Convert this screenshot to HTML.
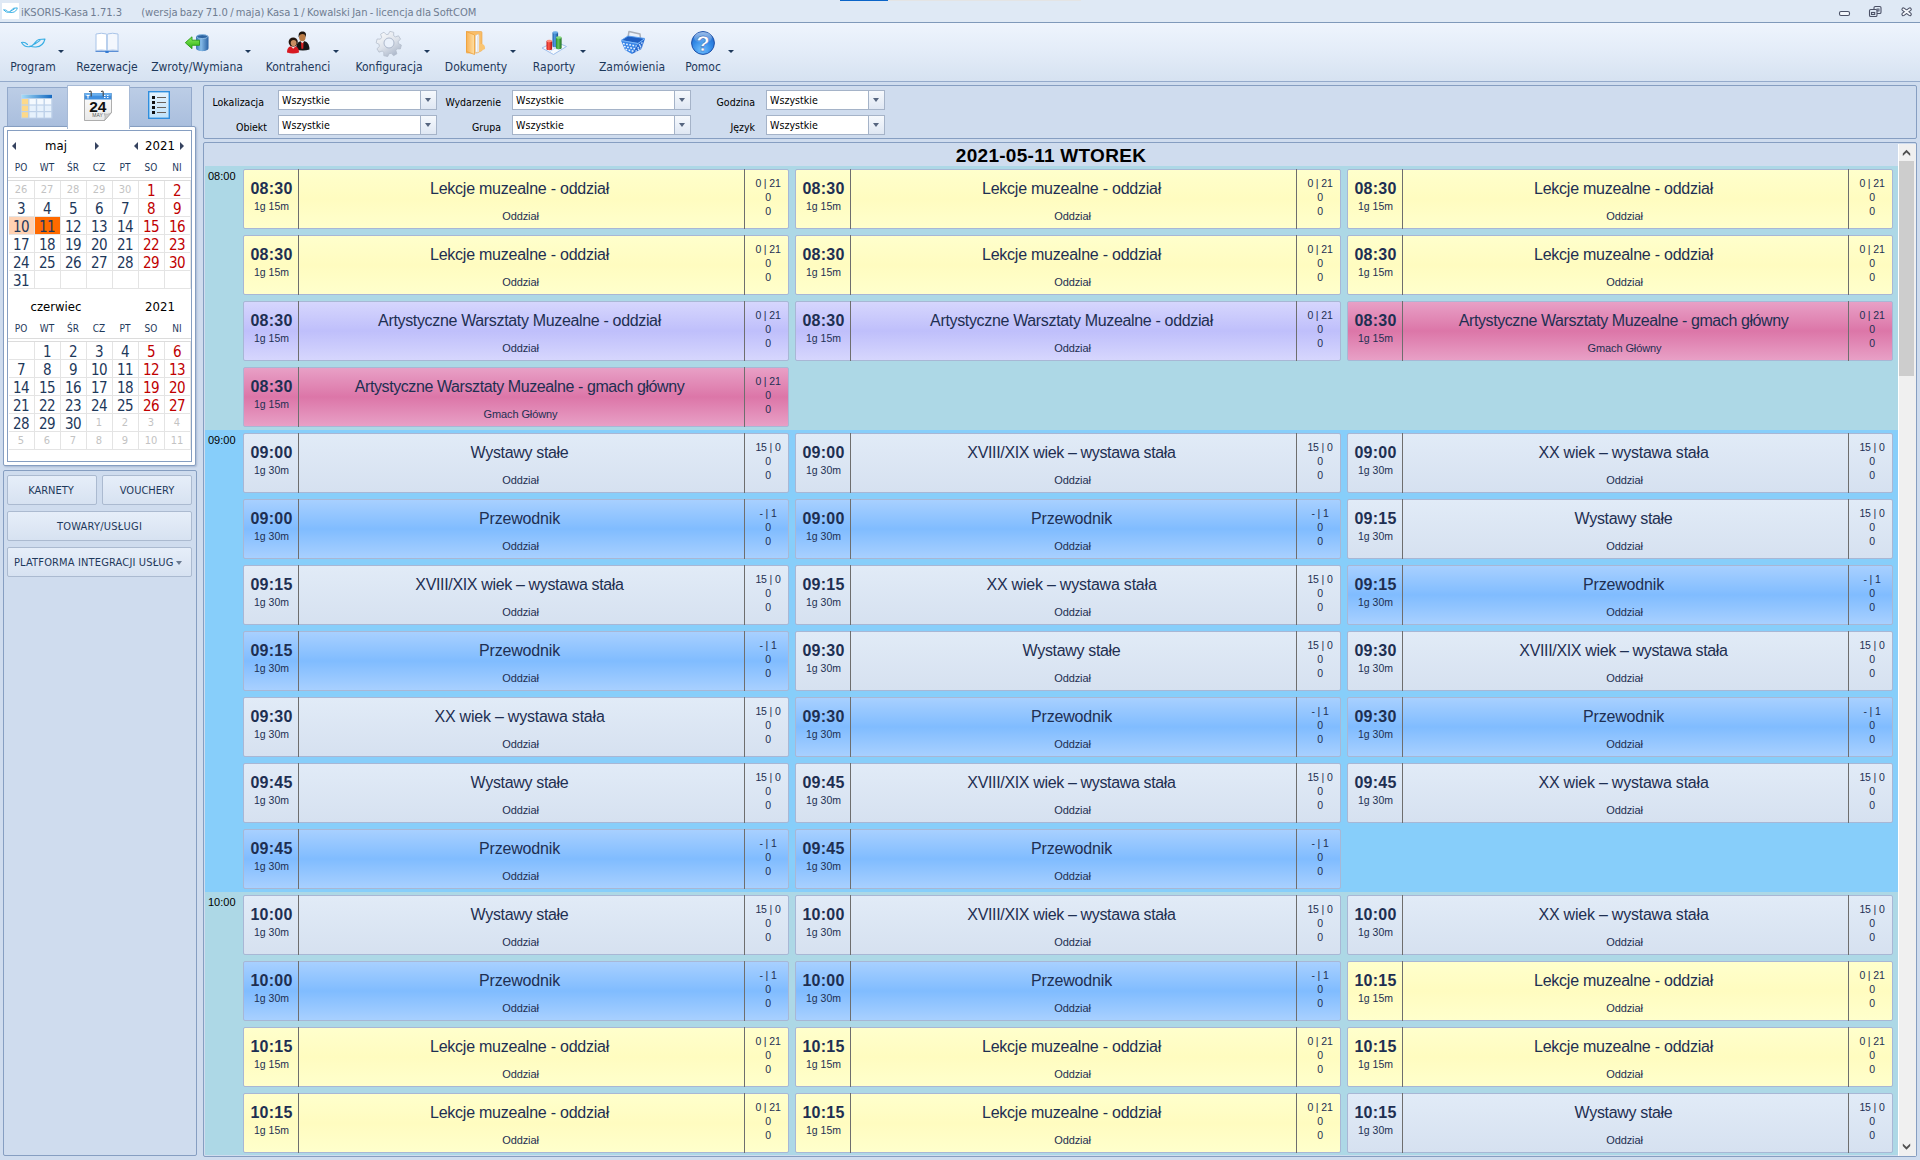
<!DOCTYPE html>
<html lang="pl"><head><meta charset="utf-8"><title>iKSORIS-Kasa</title>
<style>
*{box-sizing:border-box;margin:0;padding:0}
html,body{width:1920px;height:1160px;overflow:hidden}
body{position:relative;background:#cfdcee;font-family:"DejaVu Sans Condensed","Liberation Sans",sans-serif;font-size:11px;color:#1e395b}
.abs,.card,.c,.lbl,.combo,.btn,.tbi,.blk,.hr{position:absolute}
#title{left:0;top:0;width:1920px;height:23px;background:#dfe9f5;border-bottom:1px solid #7f99ba}
#title .tx{position:absolute;left:21px;top:6px;font-size:11.100px;color:#6f7d92;white-space:pre;word-spacing:-.9px}
#tool{left:0;top:23px;width:1920px;height:59px;background:linear-gradient(#eef4fd,#e3ecf8 50%,#d6e2f1);border-bottom:1px solid #94aacb}
.tbi{top:0;height:58px;text-align:center}
.tbi .lb{position:absolute;top:37px;left:0;width:100%;text-align:center;font-size:12px;color:#1e395b;white-space:nowrap}
.tbi svg{position:absolute;top:6px;left:50%;margin-left:-14px}
.arr{position:absolute;top:27px;width:0;height:0;border:3px solid transparent;border-top:3px solid #1e395b;border-bottom:0}
/* left */
.panel{position:absolute;border:1px solid #869ec1;border-radius:2px;background:#cfdcee}
.tab{position:absolute;top:87px;height:40px;background:linear-gradient(#bccde6,#a9bedd);border:1px solid #93a9cb;border-bottom:0}
.tab.act{top:85px;height:44px;background:#fff;border-color:#a7bad6;z-index:3}
#calw{position:absolute;left:7px;top:130px;width:185px;height:332px;background:#fff;border:1px solid #869ec1}
.mh{position:absolute;font-size:13px;color:#000;text-align:center;width:80px;margin-left:-40px}
.wdr span{position:absolute;top:162px;width:26px;margin-left:-1px;text-align:center;font-size:10px;color:#1e395b}
.wdr.b span{top:323px}
.c{width:26px;height:18px;border-right:1px solid #e4e4e4;border-bottom:1px solid #e4e4e4;text-align:center;font-size:15px;line-height:20px;padding-right:1px;color:#1e395b;letter-spacing:-.5px}
.c.w{color:#c00000}
.c.o{color:#c3c3c3;font-size:11px;letter-spacing:0;line-height:17px}
.c.s1{background:#ffd2b3}
.c.s2{background:#ff6a00;color:#1e395b}
.hr{height:1px;background:#dcdcdc;left:8px;width:183px}
.tri{position:absolute;width:0;height:0;border:4px solid transparent}
.tri.l{border-right:4.500px solid #35425f;border-left:0}
.tri.r{border-left:4.500px solid #35425f;border-right:0}
.btn{height:30px;border:1px solid #abbad0;border-radius:2px;background:linear-gradient(#e6eef9,#d7e2f1);font-size:11px;line-height:30px;text-align:center;color:#1e395b;white-space:nowrap}
/* filters */
.lbl{font-size:10.5px;color:#000;text-align:right;width:70px;white-space:nowrap}
.combo{height:20px;border:1px solid #a5b3c8;background:#fff;font-size:10.6px;color:#000;line-height:18px;padding-left:3px;white-space:nowrap}
.combo u{position:absolute;right:0;top:0;width:16px;height:18px;border-left:1px solid #a5b3c8;background:linear-gradient(#f6f9fd,#dfe7f3)}
.combo u:after{content:"";position:absolute;left:4px;top:7px;border:3.500px solid transparent;border-top:4px solid #56657f;border-bottom:0}
/* schedule */
#hdr{left:205px;top:145px;width:1692px;height:22px;text-align:center;font:bold 19px/22px "Liberation Sans",sans-serif;color:#000;letter-spacing:.28px}
.blk{left:205px;width:1693px;font:11px "Liberation Sans",sans-serif;color:#000}
.blk span{position:absolute;left:3px;top:4px}
.card{width:546px;height:60px;border:1px solid #a8b7d5;border-radius:2px;font-family:"Liberation Sans",sans-serif;color:#1e2f52}
.card:before,.card:after{content:"";position:absolute;top:-1px;height:60px;width:1px;background:#6e6e6e;left:54px}
.card:after{left:500px}
.tm{position:absolute;left:0;top:0;width:55px;height:58px;text-align:center}
.tm b{position:absolute;left:0;width:55px;top:10px;font-size:16px;line-height:18px;font-weight:bold;letter-spacing:.25px}
.tm i{position:absolute;left:0;width:55px;top:30px;font-size:10.5px;line-height:12px;font-style:normal}
.mid{position:absolute;left:55px;top:0;width:445px;height:58px;text-align:center}
.tt{position:absolute;left:-2px;width:100%;top:9px;font-size:16px;line-height:20px;white-space:nowrap;letter-spacing:-.32px}
.sb{position:absolute;left:-1px;width:100%;top:40px;font-size:11px;line-height:13px;letter-spacing:-.1px}
.rt{position:absolute;left:502px;top:6px;width:44px;text-align:center;font-size:10.5px;line-height:14px;white-space:nowrap;letter-spacing:-.15px}
.y{background:linear-gradient(#ffffcc,#fffcc0 50%,#ffffcc)}
.p{background:linear-gradient(#d6d6fd,#bfbffb 50%,#d6d6fd)}
.k{background:linear-gradient(#e8a0c6,#dc76a8 50%,#e8a0c6)}
.g{background:linear-gradient(#e1ebf7,#d6e1f0)}
.b{background:linear-gradient(#a8d0ff,#80bcff 50%,#a8d0ff)}
</style></head><body>
<!-- title bar -->
<div id="title" class="abs">
<svg class="abs" style="left:2px;top:3px" width="17" height="16" viewBox="0 0 17 16"><rect width="17" height="16" fill="#fff"/><path d="M2.500 13.500C5 17.500 9 18.500 12.500 17 16 15.500 16.500 11 20 10.500L26 10C25 14 22.500 17.500 17 18 14 18.200 12 17.500 11 17M2.500 13.500C4.500 13 7 14 8.500 15.500M14.500 15.500C17 15 19 12.500 21 11.500" transform="translate(.5 -.8) scale(.57)" fill="none" stroke="#35ade4" stroke-width="1.700" stroke-linecap="round"/></svg>
<div class="tx">iKSORIS-Kasa 1.71.3<span style="word-spacing:0">      </span>(wersja bazy 71.0 / maja) Kasa 1 / Kowalski Jan - licencja dla SoftCOM</div>
<svg class="abs" style="left:1830px;top:0" width="90" height="22" viewBox="1830 0 90 22" fill="#f3f7fc" stroke="#4b5166" stroke-width="1.100"><rect x="1839.500" y="11.500" width="10" height="4" rx="1.500"/><rect x="1874" y="6.500" width="7" height="7" rx="1.300" fill="#dfe9f5"/><rect x="1877" y="9" width="2" height="2" fill="none" stroke-width=".9"/><rect x="1869.500" y="9.500" width="7.500" height="7" rx="1.300" fill="#dfe9f5"/><rect x="1871.500" y="12.500" width="3.200" height="2" fill="none"/><path d="M1903.300 9.300l6.600 5M1909.900 9.300l-6.600 5" stroke-width="3.800" stroke-linecap="round" fill="none"/><path d="M1903.300 9.300l6.600 5M1909.900 9.300l-6.600 5" stroke="#f6f9fd" stroke-width="1.700" stroke-linecap="round" fill="none"/></svg>
</div>
<!-- toolbar -->
<div id="tool" class="abs">
<div class="tbi" style="left:-17px;width:100px"><svg width="28" height="28" viewBox="0 0 28 28"><path d="M2.500 13.500C5 17.500 9 18.500 12.500 17 16 15.500 16.500 11 20 10.500L26 10C25 14 22.500 17.500 17 18 14 18.200 12 17.500 11 17M2.500 13.500C4.500 13 7 14 8.500 15.500M14.500 15.500C17 15 19 12.500 21 11.500" fill="none" stroke="#35ade4" stroke-width="1.100" stroke-linecap="round" stroke-linejoin="round"/></svg><div class="lb">Program</div></div>
<span class="arr" style="left:58px"></span>
<div class="tbi" style="left:57px;width:100px"><svg width="28" height="28" viewBox="0 0 28 28"><path d="M2.500 21.500h23v1.500h-9.500l-1 1h-2l-1-1h-9.500z" fill="#5b8fd6"/><path d="M3 5q5.500-1.500 10.500 0v16.500q-5-1-10.500 0z" fill="#fff" stroke="#a9c4e8" stroke-width="1"/><path d="M25 5q-5.500-1.500-10.500 0v16.500q5-1 10.500 0z" fill="#f3f7fd" stroke="#a9c4e8" stroke-width="1"/><path d="M14 5v17" stroke="#c5d8f0" stroke-width="1.200"/><rect x="12.300" y="21.800" width="3.400" height="2" rx=".8" fill="#2f7ad4"/></svg><div class="lb">Rezerwacje</div></div>
<div class="tbi" style="left:147px;width:100px"><svg width="28" height="28" viewBox="0 0 28 28"><defs><linearGradient id="cy" x1="0" x2="1"><stop offset="0" stop-color="#3a78b8"/><stop offset=".4" stop-color="#86bbe8"/><stop offset="1" stop-color="#2a62a4"/></linearGradient><linearGradient id="ga" x1="0" y1="0" x2="0" y2="1"><stop offset="0" stop-color="#8cf05a"/><stop offset="1" stop-color="#2cae14"/></linearGradient></defs><path d="M13 8C13 4.500 25.500 4.500 25.500 8V19C25.500 23.200 13 23.200 13 19z" fill="url(#cy)"/><ellipse cx="19.250" cy="7.600" rx="5.400" ry="2" fill="#2d64a2" stroke="#9cc8ee" stroke-width=".8"/><path d="M2.300 13.700L9 7.800V11.200H16.500V16.300H9V19.700z" fill="url(#ga)" stroke="#2a9a18" stroke-width=".9" stroke-linejoin="round"/></svg><div class="lb">Zwroty/Wymiana</div></div>
<span class="arr" style="left:245px"></span>
<div class="tbi" style="left:248px;width:100px"><svg width="28" height="28" viewBox="0 0 28 28"><path d="M12 20.500c0-6 2.500-8.500 6.500-8.500s7 2.500 7 8.500q-6.500 2-13.500 0z" fill="#141414"/><path d="M17 12.200l1.300 1.800 1.300-1.800-.3 7.500h-2z" fill="#d81e1e"/><path d="M16.300 12l2 2.300 2-2.300z" fill="#f4f4f4"/><ellipse cx="18.300" cy="8.200" rx="3.200" ry="4" fill="#b97a45"/><path d="M14.800 8.500c-.8-4.500 1.200-6 3.700-6s4.300 1.500 3.300 6c-.4-2.800-1.300-3.500-3.300-3.500s-3.200.7-3.700 3.500z" fill="#1c120c"/><path d="M3 23.500c0-4.500 2.200-6.500 6-6.500s6 2 6 6.500q-6 2-12 0z" fill="#d81a22"/><path d="M6.800 17.300l2.400 2.500 2.400-2.500z" fill="#f6e6e0"/><ellipse cx="9.200" cy="13" rx="4.600" ry="4.600" fill="#23160f"/><ellipse cx="9.600" cy="14" rx="2.900" ry="3.100" fill="#c98e62"/></svg><div class="lb">Kontrahenci</div></div>
<span class="arr" style="left:333px"></span>
<div class="tbi" style="left:339px;width:100px"><svg width="28" height="28" viewBox="0 0 28 28"><defs><linearGradient id="gr" x1="0" y1="0" x2="1" y2="1"><stop offset="0" stop-color="#ffffff"/><stop offset=".5" stop-color="#dde2ea"/><stop offset="1" stop-color="#9ba9c0"/></linearGradient></defs><g transform="rotate(14 14 14)"><path d="M12 2.500h4l.7 3.200 2 .8 2.800-1.800 2.800 2.800-1.800 2.800.8 2 3.200.7v4l-3.200.7-.8 2 1.800 2.800-2.800 2.800-2.800-1.800-2 .8-.7 3.200h-4l-.7-3.200-2-.8-2.800 1.800-2.800-2.800 1.800-2.800-.8-2-3.200-.7v-4l3.200-.7.800-2-1.800-2.800 2.800-2.800 2.800 1.800 2-.8z" fill="url(#gr)" stroke="#b3bccb" stroke-width=".7" stroke-linejoin="round"/></g><circle cx="14" cy="14" r="5" fill="#eaf1fb" stroke="#a7b2c6" stroke-width=".9"/></svg><div class="lb">Konfiguracja</div></div>
<span class="arr" style="left:424px"></span>
<div class="tbi" style="left:426px;width:100px"><svg width="28" height="28" viewBox="0 0 28 28"><defs><linearGradient id="fo" x1="0" x2="1"><stop offset="0" stop-color="#f8b256"/><stop offset="1" stop-color="#fee0a6"/></linearGradient></defs><path d="M4.500 2.500h14.500q1 0 1 1v18l-5 2.500h-10.500z" fill="#f8bd68" stroke="#eda544" stroke-width=".6"/><path d="M13.500 6.500l3-1.500v17.500l-3 1z" fill="#fbfbfb" stroke="#c9c9c9" stroke-width=".5"/><path d="M15 7l2.200-1v16.500l-2.200 1z" fill="#e4e6ea"/><path d="M4.500 2.500l8 3.500v19.500l-8-3z" fill="url(#fo)" stroke="#ee9c30" stroke-width=".7" stroke-linejoin="round"/><path d="M17.500 15.500c3.500-1.500 6 1 5.500 4.500l-5.500 2.500z" fill="#f9c573"/></svg><div class="lb">Dokumenty</div></div>
<span class="arr" style="left:510px"></span>
<div class="tbi" style="left:504px;width:100px"><svg width="28" height="28" viewBox="0 0 28 28"><path d="M2 19l13-6.500 11.500 5-13 8z" fill="#f6fafe" stroke="#9fbfec" stroke-width="1"/><path d="M8.500 16l12 5.500M14.500 13.500l-9 7.500M20.500 15.500l-10.500 7" stroke="#bcd3f2" stroke-width=".8" fill="none"/><defs><linearGradient id="r1" x1="0" x2="1"><stop offset="0" stop-color="#c81818"/><stop offset=".4" stop-color="#ff5a4a"/><stop offset="1" stop-color="#b01010"/></linearGradient><linearGradient id="r2" x1="0" x2="1"><stop offset="0" stop-color="#1f5fa8"/><stop offset=".4" stop-color="#4f9be0"/><stop offset="1" stop-color="#174c8c"/></linearGradient><linearGradient id="r3" x1="0" x2="1"><stop offset="0" stop-color="#2c8a2c"/><stop offset=".4" stop-color="#62c85a"/><stop offset="1" stop-color="#1f6f22"/></linearGradient></defs><path d="M12.500 3.500v13.500c0 1.600 5.600 1.600 5.600 0V3.500z" fill="url(#r2)"/><ellipse cx="15.300" cy="3.500" rx="2.800" ry="1.300" fill="#6aaae6"/><path d="M6.500 12v8c0 1.600 5.600 1.600 5.600 0v-8z" fill="url(#r1)"/><ellipse cx="9.300" cy="12" rx="2.800" ry="1.300" fill="#ff8a7a"/><path d="M16 8.500v10.500c0 1.600 5.600 1.600 5.600 0V8.500z" fill="url(#r3)"/><ellipse cx="18.800" cy="8.500" rx="2.800" ry="1.300" fill="#86dc7e"/></svg><div class="lb">Raporty</div></div>
<span class="arr" style="left:580px"></span>
<div class="tbi" style="left:582px;width:100px"><svg width="28" height="28" viewBox="0 0 28 28"><path d="M9.500 11L11 2.500 22 5 22.800 12.500" fill="none" stroke="#aab0ba" stroke-width="1.500" stroke-linejoin="round"/><path d="M3 11.500L10 7 27 9.500 20 14.500z" fill="#1f5fc2" stroke="#5a9ff0" stroke-width=".9" stroke-linejoin="round"/><path d="M3 11.500L20 14.500 14 25 7 21z" fill="#3a86e8"/><path d="M20 14.500L27 9.500 23.500 20 14 25z" fill="#2468d0"/><path d="M5 14.600L18.500 17.100M6 17.500L17 19.800M7.500 20.300L15.500 22.300" stroke="#e8f2fe" stroke-width="1.500" stroke-dasharray="1.700 1.500" fill="none"/><path d="M21 16.300L25.500 12.800M19.500 19.300L24.500 15.800M17.500 22.300L23.500 18.800" stroke="#cfe3fb" stroke-width="1.400" stroke-dasharray="1.500 1.400" fill="none"/><path d="M3 11.500L20 14.500 27 9.500" fill="none" stroke="#7db6f6" stroke-width="1"/></svg><div class="lb">Zamówienia</div></div>
<div class="tbi" style="left:653px;width:100px"><svg width="28" height="28" viewBox="0 0 28 28"><defs><radialGradient id="hp" cx=".45" cy=".8" r=".85"><stop offset="0" stop-color="#6fc0ff"/><stop offset=".55" stop-color="#2f86e4"/><stop offset="1" stop-color="#2264c6"/></radialGradient><linearGradient id="hg" x1="0" y1="0" x2="0" y2="1"><stop offset="0" stop-color="#fff" stop-opacity=".55"/><stop offset="1" stop-color="#fff" stop-opacity=".05"/></linearGradient></defs><circle cx="14" cy="14" r="11.400" fill="url(#hp)" stroke="#1c4fa8" stroke-width="1"/><ellipse cx="14" cy="8.500" rx="9" ry="5.500" fill="url(#hg)"/><text x="14" y="21.500" text-anchor="middle" font-family="Liberation Sans,sans-serif" font-weight="bold" font-size="22" fill="#fff" stroke="#1c4fa8" stroke-width=".4">?</text></svg><div class="lb">Pomoc</div></div>
<span class="arr" style="left:728px"></span>
</div>
<!-- left column -->
<div class="tab" style="left:7px;width:61px"><div class="abs" style="left:13px;top:6px"><svg width="32" height="25" viewBox="0 0 32 25"><defs><linearGradient id="th" x1="0" x2="1"><stop offset="0" stop-color="#a6dcf8"/><stop offset="1" stop-color="#1468c0"/></linearGradient></defs><rect x="0" y="0" width="31.500" height="24.500" fill="#c9dcf1" opacity=".55"/><rect x=".5" y=".8" width="30.500" height="3.300" fill="url(#th)"/><rect x="0.8" y="5.0" width="6.300" height="5.400" fill="#fdd98a"/><rect x="8.5" y="5.0" width="6.300" height="5.400" fill="#f4f9fe"/><rect x="16.2" y="5.0" width="6.300" height="5.400" fill="#f4f9fe"/><rect x="23.9" y="5.0" width="6.300" height="5.400" fill="#f4f9fe"/><rect x="0.8" y="11.6" width="6.300" height="5.400" fill="#fdd98a"/><rect x="8.5" y="11.6" width="6.300" height="5.400" fill="#e6f1fc"/><rect x="16.2" y="11.6" width="6.300" height="5.400" fill="#e6f1fc"/><rect x="23.9" y="11.6" width="6.300" height="5.400" fill="#e6f1fc"/><rect x="0.8" y="18.2" width="6.300" height="5.400" fill="#fdd98a"/><rect x="8.5" y="18.2" width="6.300" height="5.400" fill="#e6f1fc"/><rect x="16.2" y="18.2" width="6.300" height="5.400" fill="#e6f1fc"/><rect x="23.9" y="18.2" width="6.300" height="5.400" fill="#e6f1fc"/></svg></div></div>
<div class="tab act" style="left:67px;width:63px"><div class="abs" style="left:15px;top:4px"><svg width="30" height="32" viewBox="0 0 30 32"><defs><linearGradient id="pg" x1="0" y1="0" x2="0" y2="1"><stop offset="0" stop-color="#fdfdfd"/><stop offset="1" stop-color="#e9e9e9"/></linearGradient></defs><path d="M1.500 3.500h27v19l-7 8h-20z" fill="url(#pg)" stroke="#9a9a9a" stroke-width=".8"/><path d="M21.500 30.500c1-3 .5-5 -.5-7 2 1 5 1 7.500-1z" fill="#cfcfcf" stroke="#9a9a9a" stroke-width=".5"/><rect x="1.500" y="3.200" width="27" height="6.300" fill="#3f8fe0"/><rect x="1.500" y="3.200" width="27" height="2.500" fill="#6cb0ee"/><path d="M3.500 5.500h3M5 5.500v3M21 5.500h1.500M24 5.500h1.500M21 7.500h1.500M24 7.500h1.500" stroke="#fff" stroke-width="1.100"/><path d="M8.200 6.500V2c0-1.300-1.800-1.300-1.800 0M20.200 6.500V2c0-1.300-1.800-1.300-1.800 0" fill="none" stroke="#444" stroke-width="1.100"/><text x="14.800" y="21.800" text-anchor="middle" font-family="Liberation Sans,sans-serif" font-weight="bold" font-size="15.500" fill="#111">24</text><text x="14.500" y="27" text-anchor="middle" font-family="Liberation Sans,sans-serif" font-size="5" fill="#555">MAY</text></svg></div></div>
<div class="tab" style="left:129px;width:63px"><div class="abs" style="left:18px;top:3px"><svg width="22" height="28" viewBox="0 0 22 28"><defs><linearGradient id="l3" x1="0" y1="0" x2="0" y2="1"><stop offset="0" stop-color="#e4f3fe"/><stop offset="1" stop-color="#bfe2fa"/></linearGradient></defs><rect x=".7" y=".7" width="20.600" height="26.600" fill="url(#l3)" stroke="#2f8ede" stroke-width="1.400"/><path d="M4 6.500h3M4 11.500h3M4 16.500h3M4 21.500h3" stroke="#111" stroke-width="3"/><path d="M9 6.500h9M9 11.500h9M9 16.500h9M9 21.500h9" stroke="#6a625c" stroke-width="1"/></svg></div></div>
<div class="panel" style="left:3px;top:126px;width:193px;height:340px;background:#fff;box-shadow:1px 1px 2px rgba(120,140,175,.45)"></div>
<div class="abs" style="left:68px;top:125px;width:61px;height:4px;background:#fff;z-index:4"></div>
<div id="calw"></div>
<div class="mh" style="left:56px;top:138px">maj</div><div class="mh" style="left:160px;top:138px">2021</div>
<div class="tri l" style="left:12px;top:142px"></div><div class="tri r" style="left:95px;top:142px"></div>
<div class="tri l" style="left:134px;top:142px"></div><div class="tri r" style="left:180px;top:142px"></div>
<div class="wdr"><span style="left:9px">PO</span><span style="left:35px">WT</span><span style="left:61px">ŚR</span><span style="left:87px">CZ</span><span style="left:113px">PT</span><span style="left:139px">SO</span><span style="left:165px">NI</span></div>
<div class="hr" style="top:177px"></div><div class="hr" style="top:180px"></div>
<div class="c o" style="left:9px;top:181px">26</div>
<div class="c o" style="left:35px;top:181px">27</div>
<div class="c o" style="left:61px;top:181px">28</div>
<div class="c o" style="left:87px;top:181px">29</div>
<div class="c o" style="left:113px;top:181px">30</div>
<div class="c w" style="left:139px;top:181px">1</div>
<div class="c w" style="left:165px;top:181px">2</div>
<div class="c" style="left:9px;top:199px">3</div>
<div class="c" style="left:35px;top:199px">4</div>
<div class="c" style="left:61px;top:199px">5</div>
<div class="c" style="left:87px;top:199px">6</div>
<div class="c" style="left:113px;top:199px">7</div>
<div class="c w" style="left:139px;top:199px">8</div>
<div class="c w" style="left:165px;top:199px">9</div>
<div class="c s1" style="left:9px;top:217px">10</div>
<div class="c s2" style="left:35px;top:217px">11</div>
<div class="c" style="left:61px;top:217px">12</div>
<div class="c" style="left:87px;top:217px">13</div>
<div class="c" style="left:113px;top:217px">14</div>
<div class="c w" style="left:139px;top:217px">15</div>
<div class="c w" style="left:165px;top:217px">16</div>
<div class="c" style="left:9px;top:235px">17</div>
<div class="c" style="left:35px;top:235px">18</div>
<div class="c" style="left:61px;top:235px">19</div>
<div class="c" style="left:87px;top:235px">20</div>
<div class="c" style="left:113px;top:235px">21</div>
<div class="c w" style="left:139px;top:235px">22</div>
<div class="c w" style="left:165px;top:235px">23</div>
<div class="c" style="left:9px;top:253px">24</div>
<div class="c" style="left:35px;top:253px">25</div>
<div class="c" style="left:61px;top:253px">26</div>
<div class="c" style="left:87px;top:253px">27</div>
<div class="c" style="left:113px;top:253px">28</div>
<div class="c w" style="left:139px;top:253px">29</div>
<div class="c w" style="left:165px;top:253px">30</div>
<div class="c" style="left:9px;top:271px">31</div>
<div class="c" style="left:35px;top:271px"></div>
<div class="c" style="left:61px;top:271px"></div>
<div class="c" style="left:87px;top:271px"></div>
<div class="c" style="left:113px;top:271px"></div>
<div class="c" style="left:139px;top:271px"></div>
<div class="c" style="left:165px;top:271px"></div>
<div class="mh" style="left:56px;top:299px">czerwiec</div><div class="mh" style="left:160px;top:299px">2021</div>
<div class="wdr b"><span style="left:9px">PO</span><span style="left:35px">WT</span><span style="left:61px">ŚR</span><span style="left:87px">CZ</span><span style="left:113px">PT</span><span style="left:139px">SO</span><span style="left:165px">NI</span></div>
<div class="hr" style="top:338px"></div><div class="hr" style="top:341px"></div>
<div class="c" style="left:9px;top:342px"></div>
<div class="c" style="left:35px;top:342px">1</div>
<div class="c" style="left:61px;top:342px">2</div>
<div class="c" style="left:87px;top:342px">3</div>
<div class="c" style="left:113px;top:342px">4</div>
<div class="c w" style="left:139px;top:342px">5</div>
<div class="c w" style="left:165px;top:342px">6</div>
<div class="c" style="left:9px;top:360px">7</div>
<div class="c" style="left:35px;top:360px">8</div>
<div class="c" style="left:61px;top:360px">9</div>
<div class="c" style="left:87px;top:360px">10</div>
<div class="c" style="left:113px;top:360px">11</div>
<div class="c w" style="left:139px;top:360px">12</div>
<div class="c w" style="left:165px;top:360px">13</div>
<div class="c" style="left:9px;top:378px">14</div>
<div class="c" style="left:35px;top:378px">15</div>
<div class="c" style="left:61px;top:378px">16</div>
<div class="c" style="left:87px;top:378px">17</div>
<div class="c" style="left:113px;top:378px">18</div>
<div class="c w" style="left:139px;top:378px">19</div>
<div class="c w" style="left:165px;top:378px">20</div>
<div class="c" style="left:9px;top:396px">21</div>
<div class="c" style="left:35px;top:396px">22</div>
<div class="c" style="left:61px;top:396px">23</div>
<div class="c" style="left:87px;top:396px">24</div>
<div class="c" style="left:113px;top:396px">25</div>
<div class="c w" style="left:139px;top:396px">26</div>
<div class="c w" style="left:165px;top:396px">27</div>
<div class="c" style="left:9px;top:414px">28</div>
<div class="c" style="left:35px;top:414px">29</div>
<div class="c" style="left:61px;top:414px">30</div>
<div class="c o" style="left:87px;top:414px">1</div>
<div class="c o" style="left:113px;top:414px">2</div>
<div class="c o" style="left:139px;top:414px">3</div>
<div class="c o" style="left:165px;top:414px">4</div>
<div class="c o" style="left:9px;top:432px">5</div>
<div class="c o" style="left:35px;top:432px">6</div>
<div class="c o" style="left:61px;top:432px">7</div>
<div class="c o" style="left:87px;top:432px">8</div>
<div class="c o" style="left:113px;top:432px">9</div>
<div class="c o" style="left:139px;top:432px">10</div>
<div class="c o" style="left:165px;top:432px">11</div>
<div class="panel" style="left:3px;top:470px;width:194px;height:686px"></div>
<div class="btn" style="left:7px;top:475px;width:90px;padding-right:2px">KARNETY</div>
<div class="btn" style="left:102px;top:475px;width:90px">VOUCHERY</div>
<div class="btn" style="left:7px;top:511px;width:185px;letter-spacing:.23px">TOWARY/USŁUGI</div>
<div class="btn" style="left:7px;top:547px;width:185px;text-align:left;padding-left:6px;letter-spacing:.15px">PLATFORMA INTEGRACJI USŁUG<span class="arr" style="left:168px;top:13px;border-width:4px 3.500px 0;border-top-color:#6a7a90"></span></div>
<!-- filters -->
<div class="panel" style="left:203px;top:85px;width:1714px;height:54px"></div>
<div class="lbl" style="left:194px;top:96px">Lokalizacja</div><div class="combo" style="left:278px;top:90px;width:159px">Wszystkie<u></u></div>
<div class="lbl" style="left:197px;top:121px">Obiekt</div><div class="combo" style="left:278px;top:115px;width:159px">Wszystkie<u></u></div>
<div class="lbl" style="left:431px;top:96px">Wydarzenie</div><div class="combo" style="left:512px;top:90px;width:179px">Wszystkie<u></u></div>
<div class="lbl" style="left:431px;top:121px">Grupa</div><div class="combo" style="left:512px;top:115px;width:179px">Wszystkie<u></u></div>
<div class="lbl" style="left:685px;top:96px">Godzina</div><div class="combo" style="left:766px;top:90px;width:119px">Wszystkie<u></u></div>
<div class="lbl" style="left:685px;top:121px">Język</div><div class="combo" style="left:766px;top:115px;width:119px">Wszystkie<u></u></div>
<!-- schedule -->
<div class="panel" style="left:203px;top:142px;width:1714px;height:1015px"></div>
<div id="hdr" class="abs">2021-05-11 WTOREK</div>
<div class="blk" style="top:166px;height:264px;background:#add8e6"><span>08:00</span></div>
<div class="blk" style="top:430px;height:462px;background:#87cefa"><span>09:00</span></div>
<div class="blk" style="top:892px;height:263px;background:#add8e6"><span>10:00</span></div>
<div class="card y" style="left:243px;top:169px"><div class="tm"><b>08:30</b><i>1g 15m</i></div><div class="mid"><span class="tt" style="letter-spacing:-0.24px">Lekcje muzealne - oddział</span><span class="sb">Oddział</span></div><div class="rt">0 | 21<br>0<br>0</div></div>
<div class="card y" style="left:795px;top:169px"><div class="tm"><b>08:30</b><i>1g 15m</i></div><div class="mid"><span class="tt" style="letter-spacing:-0.24px">Lekcje muzealne - oddział</span><span class="sb">Oddział</span></div><div class="rt">0 | 21<br>0<br>0</div></div>
<div class="card y" style="left:1347px;top:169px"><div class="tm"><b>08:30</b><i>1g 15m</i></div><div class="mid"><span class="tt" style="letter-spacing:-0.24px">Lekcje muzealne - oddział</span><span class="sb">Oddział</span></div><div class="rt">0 | 21<br>0<br>0</div></div>
<div class="card y" style="left:243px;top:235px"><div class="tm"><b>08:30</b><i>1g 15m</i></div><div class="mid"><span class="tt" style="letter-spacing:-0.24px">Lekcje muzealne - oddział</span><span class="sb">Oddział</span></div><div class="rt">0 | 21<br>0<br>0</div></div>
<div class="card y" style="left:795px;top:235px"><div class="tm"><b>08:30</b><i>1g 15m</i></div><div class="mid"><span class="tt" style="letter-spacing:-0.24px">Lekcje muzealne - oddział</span><span class="sb">Oddział</span></div><div class="rt">0 | 21<br>0<br>0</div></div>
<div class="card y" style="left:1347px;top:235px"><div class="tm"><b>08:30</b><i>1g 15m</i></div><div class="mid"><span class="tt" style="letter-spacing:-0.24px">Lekcje muzealne - oddział</span><span class="sb">Oddział</span></div><div class="rt">0 | 21<br>0<br>0</div></div>
<div class="card p" style="left:243px;top:301px"><div class="tm"><b>08:30</b><i>1g 15m</i></div><div class="mid"><span class="tt" style="letter-spacing:-0.34px">Artystyczne Warsztaty Muzealne - oddział</span><span class="sb">Oddział</span></div><div class="rt">0 | 21<br>0<br>0</div></div>
<div class="card p" style="left:795px;top:301px"><div class="tm"><b>08:30</b><i>1g 15m</i></div><div class="mid"><span class="tt" style="letter-spacing:-0.34px">Artystyczne Warsztaty Muzealne - oddział</span><span class="sb">Oddział</span></div><div class="rt">0 | 21<br>0<br>0</div></div>
<div class="card k" style="left:1347px;top:301px"><div class="tm"><b>08:30</b><i>1g 15m</i></div><div class="mid"><span class="tt" style="letter-spacing:-0.41px">Artystyczne Warsztaty Muzealne - gmach główny</span><span class="sb">Gmach Główny</span></div><div class="rt">0 | 21<br>0<br>0</div></div>
<div class="card k" style="left:243px;top:367px"><div class="tm"><b>08:30</b><i>1g 15m</i></div><div class="mid"><span class="tt" style="letter-spacing:-0.41px">Artystyczne Warsztaty Muzealne - gmach główny</span><span class="sb">Gmach Główny</span></div><div class="rt">0 | 21<br>0<br>0</div></div>
<div class="card g" style="left:243px;top:433px"><div class="tm"><b>09:00</b><i>1g 30m</i></div><div class="mid"><span class="tt" style="letter-spacing:-0.33px">Wystawy stałe</span><span class="sb">Oddział</span></div><div class="rt">15 | 0<br>0<br>0</div></div>
<div class="card g" style="left:795px;top:433px"><div class="tm"><b>09:00</b><i>1g 30m</i></div><div class="mid"><span class="tt" style="letter-spacing:-0.35px">XVIII/XIX wiek – wystawa stała</span><span class="sb">Oddział</span></div><div class="rt">15 | 0<br>0<br>0</div></div>
<div class="card g" style="left:1347px;top:433px"><div class="tm"><b>09:00</b><i>1g 30m</i></div><div class="mid"><span class="tt" style="letter-spacing:-0.22px">XX wiek – wystawa stała</span><span class="sb">Oddział</span></div><div class="rt">15 | 0<br>0<br>0</div></div>
<div class="card b" style="left:243px;top:499px"><div class="tm"><b>09:00</b><i>1g 30m</i></div><div class="mid"><span class="tt" style="letter-spacing:-0.17px">Przewodnik</span><span class="sb">Oddział</span></div><div class="rt">- | 1<br>0<br>0</div></div>
<div class="card b" style="left:795px;top:499px"><div class="tm"><b>09:00</b><i>1g 30m</i></div><div class="mid"><span class="tt" style="letter-spacing:-0.17px">Przewodnik</span><span class="sb">Oddział</span></div><div class="rt">- | 1<br>0<br>0</div></div>
<div class="card g" style="left:1347px;top:499px"><div class="tm"><b>09:15</b><i>1g 30m</i></div><div class="mid"><span class="tt" style="letter-spacing:-0.33px">Wystawy stałe</span><span class="sb">Oddział</span></div><div class="rt">15 | 0<br>0<br>0</div></div>
<div class="card g" style="left:243px;top:565px"><div class="tm"><b>09:15</b><i>1g 30m</i></div><div class="mid"><span class="tt" style="letter-spacing:-0.35px">XVIII/XIX wiek – wystawa stała</span><span class="sb">Oddział</span></div><div class="rt">15 | 0<br>0<br>0</div></div>
<div class="card g" style="left:795px;top:565px"><div class="tm"><b>09:15</b><i>1g 30m</i></div><div class="mid"><span class="tt" style="letter-spacing:-0.22px">XX wiek – wystawa stała</span><span class="sb">Oddział</span></div><div class="rt">15 | 0<br>0<br>0</div></div>
<div class="card b" style="left:1347px;top:565px"><div class="tm"><b>09:15</b><i>1g 30m</i></div><div class="mid"><span class="tt" style="letter-spacing:-0.17px">Przewodnik</span><span class="sb">Oddział</span></div><div class="rt">- | 1<br>0<br>0</div></div>
<div class="card b" style="left:243px;top:631px"><div class="tm"><b>09:15</b><i>1g 30m</i></div><div class="mid"><span class="tt" style="letter-spacing:-0.17px">Przewodnik</span><span class="sb">Oddział</span></div><div class="rt">- | 1<br>0<br>0</div></div>
<div class="card g" style="left:795px;top:631px"><div class="tm"><b>09:30</b><i>1g 30m</i></div><div class="mid"><span class="tt" style="letter-spacing:-0.33px">Wystawy stałe</span><span class="sb">Oddział</span></div><div class="rt">15 | 0<br>0<br>0</div></div>
<div class="card g" style="left:1347px;top:631px"><div class="tm"><b>09:30</b><i>1g 30m</i></div><div class="mid"><span class="tt" style="letter-spacing:-0.35px">XVIII/XIX wiek – wystawa stała</span><span class="sb">Oddział</span></div><div class="rt">15 | 0<br>0<br>0</div></div>
<div class="card g" style="left:243px;top:697px"><div class="tm"><b>09:30</b><i>1g 30m</i></div><div class="mid"><span class="tt" style="letter-spacing:-0.22px">XX wiek – wystawa stała</span><span class="sb">Oddział</span></div><div class="rt">15 | 0<br>0<br>0</div></div>
<div class="card b" style="left:795px;top:697px"><div class="tm"><b>09:30</b><i>1g 30m</i></div><div class="mid"><span class="tt" style="letter-spacing:-0.17px">Przewodnik</span><span class="sb">Oddział</span></div><div class="rt">- | 1<br>0<br>0</div></div>
<div class="card b" style="left:1347px;top:697px"><div class="tm"><b>09:30</b><i>1g 30m</i></div><div class="mid"><span class="tt" style="letter-spacing:-0.17px">Przewodnik</span><span class="sb">Oddział</span></div><div class="rt">- | 1<br>0<br>0</div></div>
<div class="card g" style="left:243px;top:763px"><div class="tm"><b>09:45</b><i>1g 30m</i></div><div class="mid"><span class="tt" style="letter-spacing:-0.33px">Wystawy stałe</span><span class="sb">Oddział</span></div><div class="rt">15 | 0<br>0<br>0</div></div>
<div class="card g" style="left:795px;top:763px"><div class="tm"><b>09:45</b><i>1g 30m</i></div><div class="mid"><span class="tt" style="letter-spacing:-0.35px">XVIII/XIX wiek – wystawa stała</span><span class="sb">Oddział</span></div><div class="rt">15 | 0<br>0<br>0</div></div>
<div class="card g" style="left:1347px;top:763px"><div class="tm"><b>09:45</b><i>1g 30m</i></div><div class="mid"><span class="tt" style="letter-spacing:-0.22px">XX wiek – wystawa stała</span><span class="sb">Oddział</span></div><div class="rt">15 | 0<br>0<br>0</div></div>
<div class="card b" style="left:243px;top:829px"><div class="tm"><b>09:45</b><i>1g 30m</i></div><div class="mid"><span class="tt" style="letter-spacing:-0.17px">Przewodnik</span><span class="sb">Oddział</span></div><div class="rt">- | 1<br>0<br>0</div></div>
<div class="card b" style="left:795px;top:829px"><div class="tm"><b>09:45</b><i>1g 30m</i></div><div class="mid"><span class="tt" style="letter-spacing:-0.17px">Przewodnik</span><span class="sb">Oddział</span></div><div class="rt">- | 1<br>0<br>0</div></div>
<div class="card g" style="left:243px;top:895px"><div class="tm"><b>10:00</b><i>1g 30m</i></div><div class="mid"><span class="tt" style="letter-spacing:-0.33px">Wystawy stałe</span><span class="sb">Oddział</span></div><div class="rt">15 | 0<br>0<br>0</div></div>
<div class="card g" style="left:795px;top:895px"><div class="tm"><b>10:00</b><i>1g 30m</i></div><div class="mid"><span class="tt" style="letter-spacing:-0.35px">XVIII/XIX wiek – wystawa stała</span><span class="sb">Oddział</span></div><div class="rt">15 | 0<br>0<br>0</div></div>
<div class="card g" style="left:1347px;top:895px"><div class="tm"><b>10:00</b><i>1g 30m</i></div><div class="mid"><span class="tt" style="letter-spacing:-0.22px">XX wiek – wystawa stała</span><span class="sb">Oddział</span></div><div class="rt">15 | 0<br>0<br>0</div></div>
<div class="card b" style="left:243px;top:961px"><div class="tm"><b>10:00</b><i>1g 30m</i></div><div class="mid"><span class="tt" style="letter-spacing:-0.17px">Przewodnik</span><span class="sb">Oddział</span></div><div class="rt">- | 1<br>0<br>0</div></div>
<div class="card b" style="left:795px;top:961px"><div class="tm"><b>10:00</b><i>1g 30m</i></div><div class="mid"><span class="tt" style="letter-spacing:-0.17px">Przewodnik</span><span class="sb">Oddział</span></div><div class="rt">- | 1<br>0<br>0</div></div>
<div class="card y" style="left:1347px;top:961px"><div class="tm"><b>10:15</b><i>1g 15m</i></div><div class="mid"><span class="tt" style="letter-spacing:-0.24px">Lekcje muzealne - oddział</span><span class="sb">Oddział</span></div><div class="rt">0 | 21<br>0<br>0</div></div>
<div class="card y" style="left:243px;top:1027px"><div class="tm"><b>10:15</b><i>1g 15m</i></div><div class="mid"><span class="tt" style="letter-spacing:-0.24px">Lekcje muzealne - oddział</span><span class="sb">Oddział</span></div><div class="rt">0 | 21<br>0<br>0</div></div>
<div class="card y" style="left:795px;top:1027px"><div class="tm"><b>10:15</b><i>1g 15m</i></div><div class="mid"><span class="tt" style="letter-spacing:-0.24px">Lekcje muzealne - oddział</span><span class="sb">Oddział</span></div><div class="rt">0 | 21<br>0<br>0</div></div>
<div class="card y" style="left:1347px;top:1027px"><div class="tm"><b>10:15</b><i>1g 15m</i></div><div class="mid"><span class="tt" style="letter-spacing:-0.24px">Lekcje muzealne - oddział</span><span class="sb">Oddział</span></div><div class="rt">0 | 21<br>0<br>0</div></div>
<div class="card y" style="left:243px;top:1093px"><div class="tm"><b>10:15</b><i>1g 15m</i></div><div class="mid"><span class="tt" style="letter-spacing:-0.24px">Lekcje muzealne - oddział</span><span class="sb">Oddział</span></div><div class="rt">0 | 21<br>0<br>0</div></div>
<div class="card y" style="left:795px;top:1093px"><div class="tm"><b>10:15</b><i>1g 15m</i></div><div class="mid"><span class="tt" style="letter-spacing:-0.24px">Lekcje muzealne - oddział</span><span class="sb">Oddział</span></div><div class="rt">0 | 21<br>0<br>0</div></div>
<div class="card g" style="left:1347px;top:1093px"><div class="tm"><b>10:15</b><i>1g 30m</i></div><div class="mid"><span class="tt" style="letter-spacing:-0.33px">Wystawy stałe</span><span class="sb">Oddział</span></div><div class="rt">15 | 0<br>0<br>0</div></div>
<!-- scrollbar -->
<div class="abs" style="left:1898px;top:144px;width:1px;height:1012px;background:#fff"></div>
<div class="abs" style="left:1899px;top:144px;width:17px;height:1012px;background:#f0f0f0"></div>
<div class="abs" style="left:1899px;top:161px;width:15px;height:215px;background:#cdcdcd"></div>
<svg class="abs" style="left:1899px;top:144px" width="17" height="17" viewBox="0 0 17 17"><path d="M3.800 12V9.500L7.500 5.800 11.200 9.500V12L7.500 8.600z" fill="#505050"/></svg>
<svg class="abs" style="left:1899px;top:1138px" width="17" height="17" viewBox="0 0 17 17"><path d="M3.800 5.500V8L7.500 11.700 11.200 8V5.500L7.500 8.900z" fill="#505050"/></svg>
<div class="abs" style="left:840px;top:0;width:48px;height:1px;background:#0a64c8"></div>
<div class="abs" style="left:888px;top:0;width:193px;height:1px;background:#e4e4e4"></div>
<!-- window left edge -->

</body></html>
